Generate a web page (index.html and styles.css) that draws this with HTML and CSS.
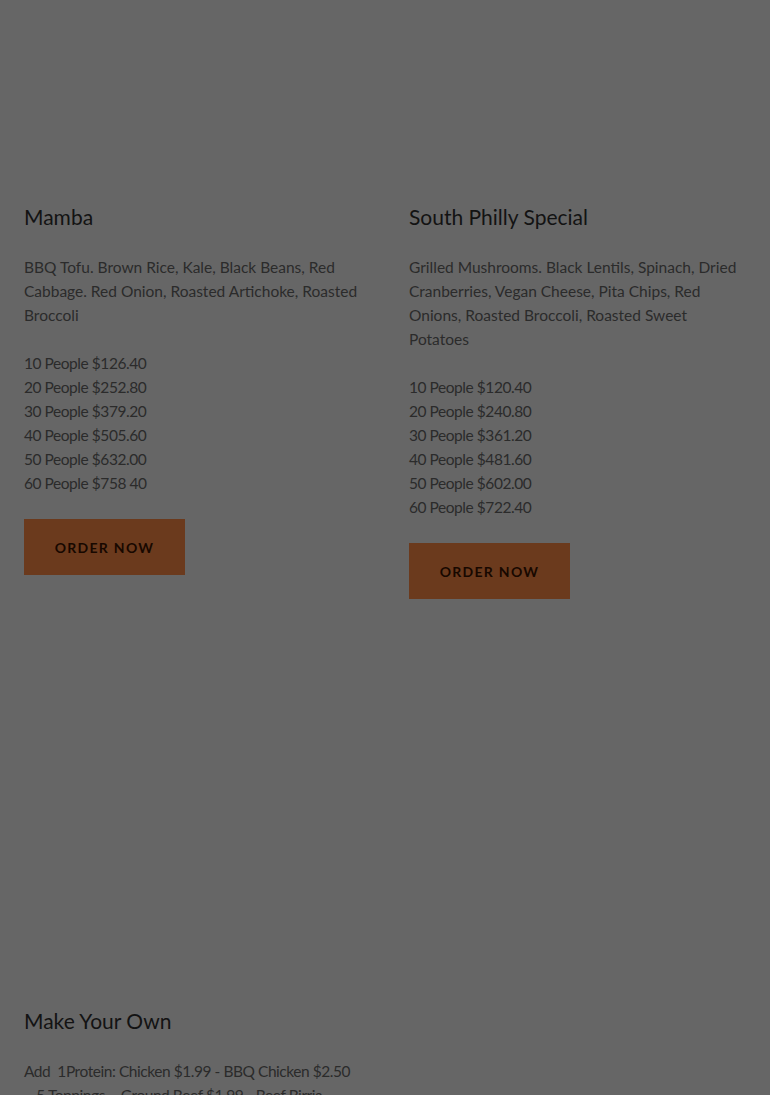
FILE: index.html
```html
<!DOCTYPE html>
<html lang="en">
<head>
<meta charset="utf-8">
<title>Catering Menu</title>
<link rel="stylesheet" href="styles.css">
</head>
<body>
<main class="menu">
  <article class="card">
    <div class="media"></div>
    <h3 class="card-title">Mamba</h3>
    <p class="desc">BBQ Tofu. Brown Rice, Kale, Black Beans, Red Cabbage. Red Onion, Roasted Artichoke, Roasted Broccoli</p>
    <p class="prices">10 People $126.40<br>20 People $252.80<br>30 People $379.20<br>40 People $505.60<br>50 People $632.00<br>60 People $758 40</p>
    <a class="btn" href="#">Order Now</a>
  </article>
  <article class="card">
    <div class="media"></div>
    <h3 class="card-title">South Philly Special</h3>
    <p class="desc">Grilled Mushrooms. Black Lentils, Spinach, Dried Cranberries, Vegan Cheese, Pita Chips, Red Onions, Roasted Broccoli, Roasted Sweet Potatoes</p>
    <p class="prices">10 People $120.40<br>20 People $240.80<br>30 People $361.20<br>40 People $481.60<br>50 People $602.00<br>60 People $722.40</p>
    <a class="btn" href="#">Order Now</a>
  </article>
  <article class="card">
    <div class="media"></div>
    <h3 class="card-title">Make Your Own</h3>
    <p class="desc tight">Add&nbsp; 1Protein: Chicken $1.99 - BBQ Chicken $2.50<br>&nbsp;- 5 Toppings&nbsp; - Ground Beef $1.99 - Beef Birria</p>
  </article>
</main>
</body>
</html>
```
FILE: styles.css
```css
html, body {
  margin: 0;
  padding: 0;
  background: #666666;
}

body {
  font-family: "Lato", "Liberation Sans", sans-serif;
  color: #2b2b2b;
}

.menu {
  display: grid;
  grid-template-columns: 1fr 1fr;
  row-gap: 205px;
  align-items: start;
}

.card {
  padding: 0 24px;
}

.media {
  height: 204px;
}

.card-title {
  margin: 0 0 25px;
  font-size: 21px;
  line-height: 26px;
  font-weight: 400;
  color: #131313;
}

.desc,
.prices {
  margin: 0 0 24px;
  font-size: 15.5px;
  line-height: 24px;
}

.prices,
.tight {
  letter-spacing: -0.45px;
  white-space: nowrap;
}

.btn {
  display: inline-flex;
  align-items: center;
  justify-content: center;
  width: 161px;
  height: 56px;
  background: #6b3a1d;
  color: #170800;
  font-size: 14px;
  font-weight: 700;
  letter-spacing: 1.3px;
  text-transform: uppercase;
  text-decoration: none;
}
```
